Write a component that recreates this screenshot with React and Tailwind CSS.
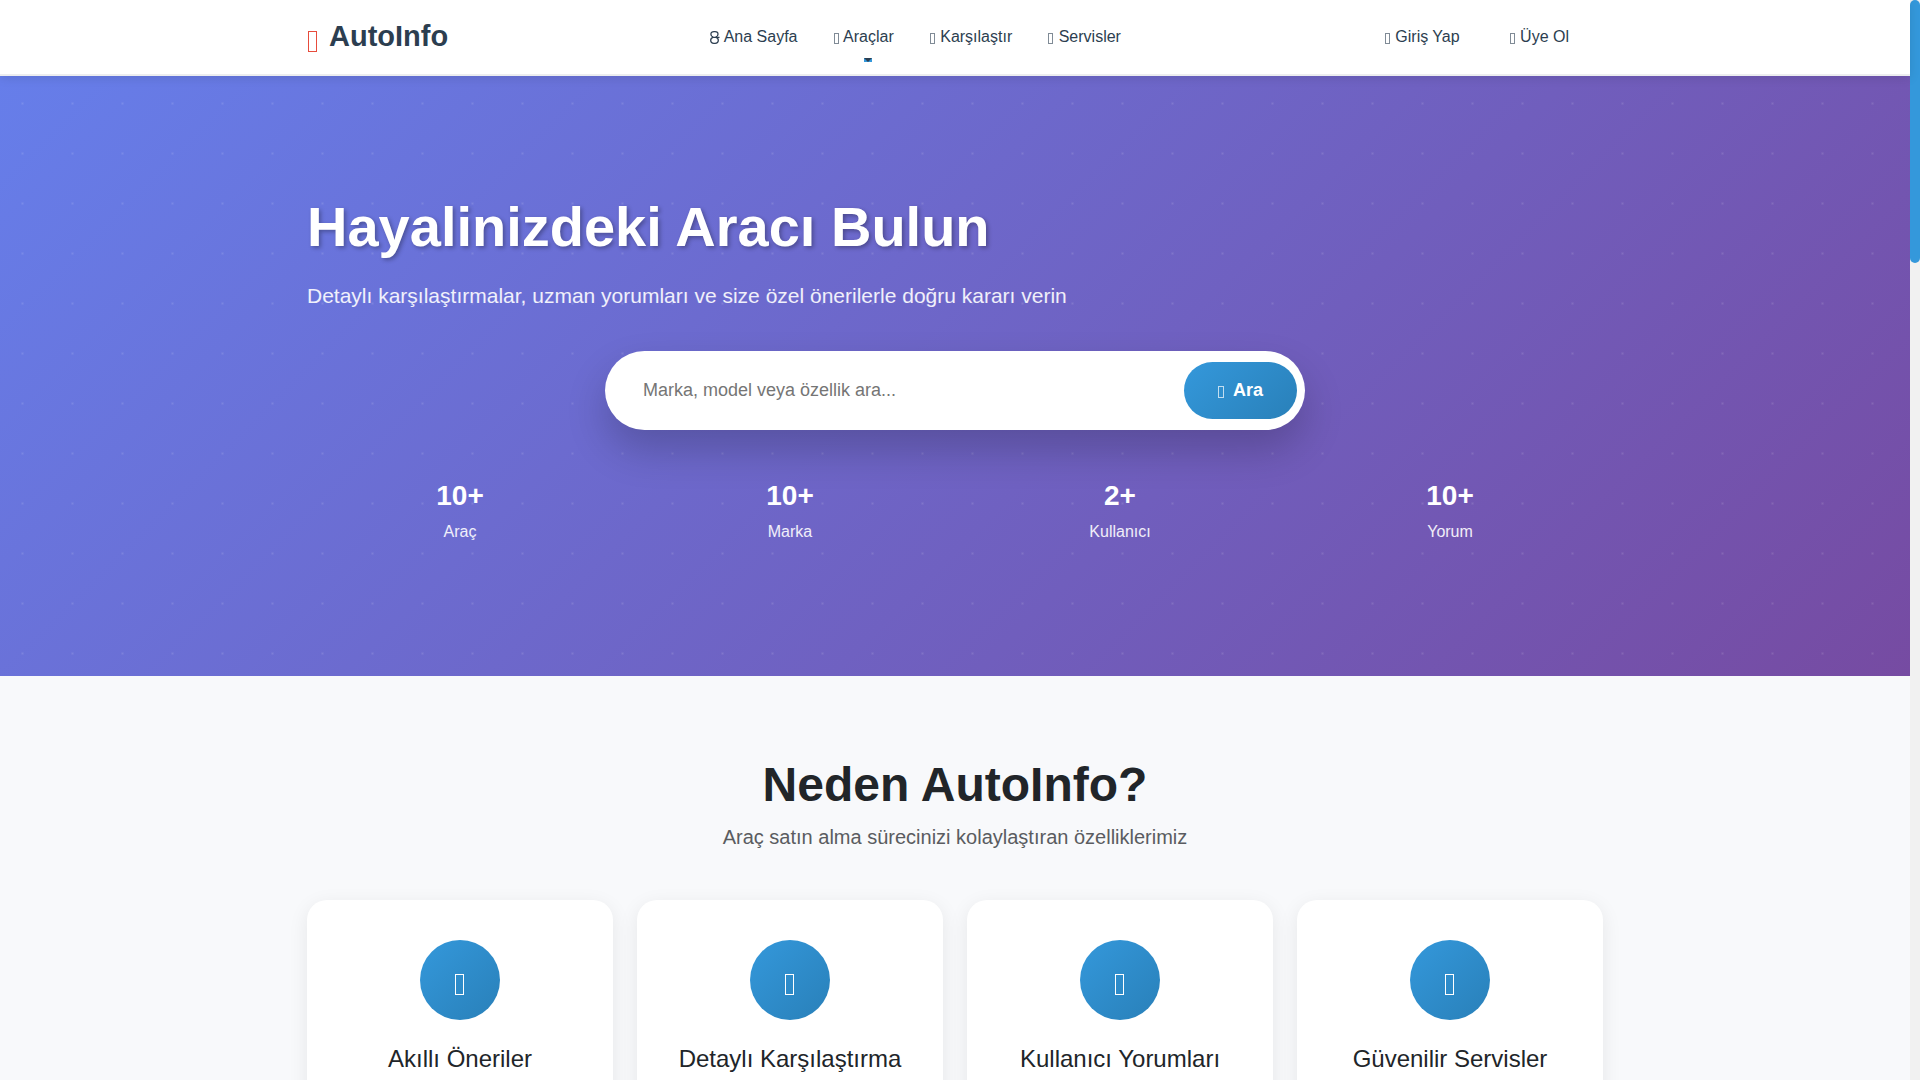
import React from "react";

const navLinks = [
  { label: "Ana Sayfa", home: true },
  { label: "Araçlar", menu: true },
  { label: "Karşılaştır" },
  { label: "Servisler" },
];

const accountLinks = [{ label: "Giriş Yap" }, { label: "Üye Ol" }];

const stats = [
  { value: "10+", label: "Araç" },
  { value: "10+", label: "Marka" },
  { value: "2+", label: "Kullanıcı" },
  { value: "10+", label: "Yorum" },
];

const features = [
  "Akıllı Öneriler",
  "Detaylı Karşılaştırma",
  "Kullanıcı Yorumları",
  "Güvenilir Servisler",
];

function HomeIcon() {
  return (
    <svg viewBox="0 0 10 13" className="inline-block h-[13px] w-2.5 align-[-2px]" fill="none" stroke="currentColor" strokeWidth="1.3" aria-hidden="true">
      <path d="M3.2 6.2C1.6 5.6.9 4.600.9 3.200.9 1.600 2.100.7 4 .7h1C6.900.7 8 1.600 8 3.200c0 1.400-.7 2.400-2.300 3" />
      <path d="M3.200 6.300h6.300M3.200 6.300C1.500 6.700.7 7.700.7 9.300c0 2 1.200 3 3.300 3h1c2.100 0 3.300-1 3.300-3 0-1.600-.8-2.600-2.500-3" />
    </svg>
  );
}

function NavIcon() {
  return (
    <svg viewBox="0 0 6 11" className="inline-block h-[11px] w-1.5 align-[-2px]" fill="none" stroke="currentColor" aria-hidden="true">
      <rect x="0.5" y="0.5" width="4" height="10" strokeOpacity="0.6" />
    </svg>
  );
}

function SearchIcon() {
  return (
    <svg viewBox="0 0 7 15" className="h-[15px] w-[7px]" fill="none" stroke="currentColor" aria-hidden="true">
      <rect x="0.5" y="3.5" width="5" height="11" strokeOpacity="0.7" />
    </svg>
  );
}

function LargeIcon({ className = "" }) {
  return (
    <svg viewBox="0 0 12 30" className={`h-[30px] w-3 ${className}`} fill="none" stroke="currentColor" aria-hidden="true">
      <rect x="1.5" y="9.5" width="8" height="20" />
    </svg>
  );
}

function NavLink({ label, menu, home }) {
  return (
    <a href="#" className="relative px-4 py-2 text-base text-[#2c3e50]">
      {home ? <HomeIcon /> : <NavIcon />} {label}
      {menu && (
        <span className="absolute -bottom-[5px] left-1/2 h-1 w-2 bg-[#3498db]">
          <svg viewBox="0 0 8 4" className="block h-1 w-2" aria-hidden="true">
            <path d="M0 0h8L4 4z" fill="#2c3e50" />
          </svg>
        </span>
      )}
    </a>
  );
}

function Header() {
  return (
    <header className="relative z-10 border-b-2 border-[#ecedef] bg-white shadow-[0_2px_10px_rgba(0,0,0,0.1)]">
      <div className="mx-auto flex h-[74px] max-w-[1320px] items-center justify-between px-3">
        <a href="#" className="mr-3.5 flex items-center gap-2.5 text-[29px] font-bold text-[#2c3e50]">
          <LargeIcon className="text-[#e74c3c]" />
          AutoInfo
        </a>
        <nav className="flex gap-1">
          {navLinks.map((l) => <NavLink key={l.label} {...l} />)}
        </nav>
        <nav className="flex gap-[18px] pr-[18px]">
          {accountLinks.map((l) => <NavLink key={l.label} {...l} />)}
        </nav>
      </div>
    </header>
  );
}

function Hero() {
  return (
    <section className="bg-[radial-gradient(circle_at_45%_55%,rgba(255,255,255,0.12)_0px,transparent_2px),linear-gradient(135deg,#667eea_0%,#764ba2_100%)] bg-[size:50px_50px,100%_100%] text-white">
      <div className="mx-auto flex min-h-[600px] max-w-[1320px] flex-col justify-center px-3">
        <h1 className="mb-5 text-[56px] leading-[67px] font-bold [text-shadow:2px_2px_4px_rgba(0,0,0,0.3)]">
          Hayalinizdeki Aracı Bulun
        </h1>
        <p className="mb-10 text-[21px] leading-[31px] text-white/90">
          Detaylı karşılaştırmalar, uzman yorumları ve size özel önerilerle doğru kararı verin
        </p>
        <form className="mx-auto mb-[50px] flex w-full max-w-[700px] items-center rounded-full bg-white p-2 shadow-[0_20px_40px_rgba(0,0,0,0.2)]">
          <input
            type="search"
            aria-label="Araç ara"
            placeholder="Marka, model veya özellik ara..."
            className="h-[63px] min-w-0 flex-1 bg-transparent pr-4 pl-[30px] text-lg text-gray-800 outline-none placeholder:text-[#757575]"
          />
          <button type="button" className="flex h-[57px] items-center gap-2 rounded-full bg-linear-135 from-[#3498db] to-[#2980b9] px-[34px] text-lg font-bold">
            <SearchIcon />
            Ara
          </button>
        </form>
        <dl className="-mx-3 mb-4 grid grid-cols-4 text-center">
          {stats.map((s) => (
            <div key={s.label} className="flex flex-col-reverse">
              <dt className="text-base text-white/90">{s.label}</dt>
              <dd className="mb-2 text-[28px] leading-8 font-bold">{s.value}</dd>
            </div>
          ))}
        </dl>
      </div>
    </section>
  );
}

function Features() {
  return (
    <section className="py-20">
      <div className="mx-auto max-w-[1320px] px-3">
        <h2 className="mb-2 text-center text-5xl leading-[58px] font-bold text-[#212529]">Neden AutoInfo?</h2>
        <p className="mb-12 text-center text-xl leading-[30px] text-[#5a5c60]">
          Araç satın alma sürecinizi kolaylaştıran özelliklerimiz
        </p>
        <div className="grid grid-cols-4 gap-6">
          {features.map((title) => (
            <article key={title} className="rounded-[20px] bg-white px-6 pt-10 pb-24 text-center shadow-[0_5px_20px_rgba(0,0,0,0.08)]">
              <div className="mx-auto mb-6 flex size-20 items-center justify-center rounded-full bg-linear-135 from-[#3498db] to-[#2980b9] text-white">
                <LargeIcon />
              </div>
              <h3 className="text-2xl leading-[29px] text-[#212529]">{title}</h3>
            </article>
          ))}
        </div>
      </div>
    </section>
  );
}

export default function App() {
  return (
    <div className="flex h-screen overflow-hidden bg-[#f8f9fb] font-['Liberation_Sans',Arial,sans-serif]">
      <div className="min-w-0 flex-1">
        <Header />
        <main>
          <Hero />
          <Features />
        </main>
      </div>
      <div aria-hidden="true" className="w-2.5 bg-[#f1f1f1]">
        <div className="h-[263px] rounded-full bg-[#3498db]" />
      </div>
    </div>
  );
}
